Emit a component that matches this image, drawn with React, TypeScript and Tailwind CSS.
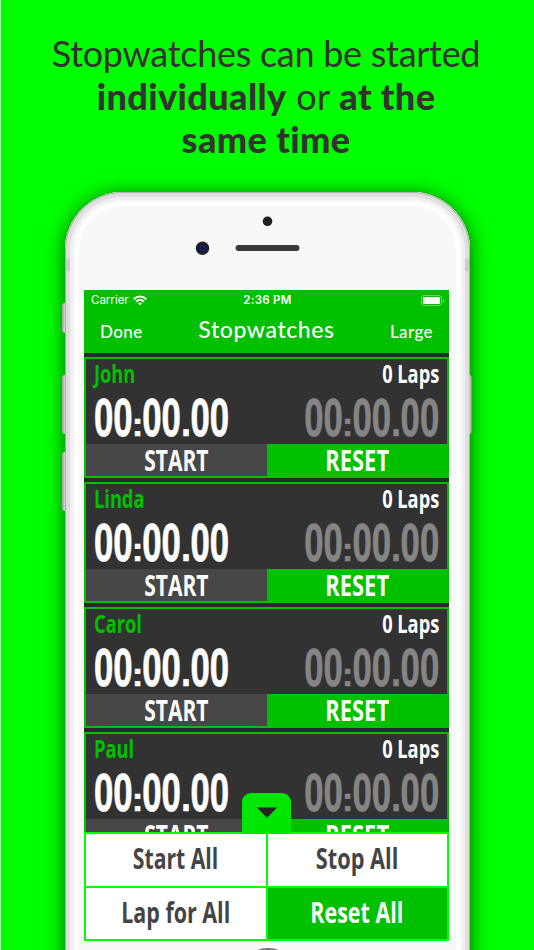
const stopwatches = [
    { name: "John", laps: 0 },
    { name: "Linda", laps: 0 },
    { name: "Carol", laps: 0 },
    { name: "Paul", laps: 0 },
];

function Time({ className }: { className: string }) {
    return (
        <div className={`flex shrink-0 items-baseline scale-x-[0.655] font-['Liberation_Sans',sans-serif] text-[53px] leading-[44px] font-bold whitespace-nowrap [-webkit-text-stroke:0.7px_currentColor] ${className}`}>
            <span>00</span>
            <span className="w-[14.7px] scale-x-[1.5] text-center text-[34px]">:</span>
            <span>00</span>
            <span className="w-[14.7px] scale-x-[1.25] text-center text-[42px]">.</span>
            <span>00</span>
        </div>
    );
}

function StopwatchCard({ name, laps }: { name: string; laps: number }) {
    return (
        <div className="h-[121px] shrink-0 border-2 border-[#00c000] bg-[#323232]">
            <div className="flex h-[34px] items-start justify-between pl-2 pr-2 text-[25px] leading-[29px] font-bold">
                <span className="origin-left scale-x-[0.73] text-[#00c000]">{name}</span>
                <span className="origin-right scale-x-[0.73] text-white">{laps} Laps</span>
            </div>
            <div className="flex h-[51px] items-center justify-between pt-[4px] pl-2 pr-2">
                <Time className="-mr-[72px] origin-left text-white" />
                <Time className="-ml-[72px] origin-right text-[#858585]" />
            </div>
            <div className="flex h-8 items-start text-[29px] font-bold leading-[31px] text-white">
                <div className="flex h-full w-[181px] justify-center bg-[#474747]">
                    <span className="scale-x-[0.725]">START</span>
                </div>
                <div className="flex h-full flex-1 justify-center bg-[#00c000]">
                    <span className="scale-x-[0.755]">RESET</span>
                </div>
            </div>
        </div>
    );
}

function StatusBar() {
    return (
        <div className="grid h-[20px] grid-cols-3 items-center pt-px pl-[7px] pr-[5px] font-['Inter',sans-serif] text-[11.5px] text-white">
            <div className="flex items-center gap-1">
                <span>Carrier</span>
                <svg width="14" height="11" viewBox="0 0 14 11" fill="none" stroke="currentColor" strokeWidth="2.1">
                    <path d="M0.7 4.2C4.2 0.6 9.8 0.6 13.3 4.2" />
                    <path d="M3 6.6C5.3 4.4 8.7 4.4 11 6.6" />
                    <path d="M7 10.4L4.9 8.2C6.1 7.2 7.9 7.2 9.1 8.2Z" fill="currentColor" stroke="none" />
                </svg>
            </div>
            <span className="text-center font-semibold tracking-[0.3px]">2:36 PM</span>
            <div className="flex items-center justify-end gap-px">
                <div className="h-[11px] w-[21px] rounded-[3px] border border-[#6cd86c] p-px">
                    <div className="h-full rounded-[1px] bg-white" />
                </div>
                <div className="h-1 w-px rounded-r bg-[#6cd86c]" />
            </div>
        </div>
    );
}

export default function App() {
    return (
        <div className="relative flex h-[950px] w-[534px] flex-col items-center overflow-hidden border-l border-[#b5ffb5] bg-[#00ff00] font-['Open_Sans',sans-serif]">
            {/* headline */}
            <h1 className="h-[192px] shrink-0 pt-[32px] pr-[3px] text-center font-['Lato',sans-serif] text-[36px] leading-[43px] whitespace-nowrap text-[#323232]">
                <span className="block tracking-[-0.28px]">Stopwatches can be started</span>
                <span className="block tracking-[0.4px]"><b className="font-black">individually</b> or <b className="font-black">at the</b></span>
                <b className="block font-black tracking-[0.4px]">same time</b>
            </h1>

            {/* phone */}
            <div className="relative h-[860px] w-[405px] shrink-0 rounded-[58px] bg-[#f8f8f8] shadow-[0_3px_20px_rgba(0,50,0,0.75),inset_0_0_0_1px_#adadad,inset_0_0_0_5px_#dfdfdf,inset_0_0_0_8px_#f0f0f0,inset_0_0_0_10px_#f8f8f8,inset_0_0_0_14px_#ffffff]">
                {/* side buttons and antenna bands */}
                <div className="absolute top-[111px] -left-[3px] h-[30px] w-[3px] rounded-l-sm bg-linear-to-r from-[#999999] to-[#dddddd]" />
                <div className="absolute top-[183px] -left-[3px] h-[59px] w-[3px] rounded-l-sm bg-linear-to-r from-[#999999] to-[#dddddd]" />
                <div className="absolute top-[260px] -left-[3px] h-[59px] w-[3px] rounded-l-sm bg-linear-to-r from-[#999999] to-[#dddddd]" />
                <div className="absolute top-[183px] -right-[2px] h-[59px] w-[3px] rounded-r-sm bg-linear-to-r from-[#dddddd] to-[#888888]" />
                <div className="absolute top-[67px] left-px h-3 w-1 bg-[#cccccc]" />
                <div className="absolute top-[67px] right-px h-3 w-1 bg-[#cccccc]" />

                {/* camera, sensor and speaker */}
                <svg className="block" width="405" height="98" viewBox="0 0 405 98">
                    <circle cx="202.5" cy="29.3" r="4.8" fill="#1e1e1e" />
                    <circle cx="137.5" cy="56.3" r="6.7" fill="#222222" />
                    <circle cx="137.5" cy="56.3" r="4.3" fill="#101332" />
                    <circle cx="137.5" cy="56.3" r="2.5" fill="none" stroke="#24369a" />
                    <rect x="170.5" y="53" width="64" height="6" rx="3" fill="#383838" />
                </svg>

                {/* screen */}
                <div className="ml-[19px] flex h-[651px] w-[365px] flex-col bg-[#292929]">
                    <div className="h-[63px] shrink-0 bg-[#00c000]">
                        <StatusBar />
                        <div className="grid h-[43px] grid-cols-[1fr_auto_1fr] items-center px-4 font-['Lato',sans-serif] text-[17px] font-medium tracking-[0.4px] text-white">
                            <span>Done</span>
                            <span className="pb-1 text-[23px] tracking-[0.6px]">Stopwatches</span>
                            <span className="text-right">Large</span>
                        </div>
                    </div>
                    <div className="flex h-[479px] shrink-0 flex-col gap-1 overflow-hidden pt-[4px]">
                        {stopwatches.map((item) => (
                            <StopwatchCard key={item.name} name={item.name} laps={item.laps} />
                        ))}
                    </div>
                    <div className="relative grid h-[109px] w-[365px] grid-cols-2 grid-rows-2 gap-[2px] border-2 border-[#00ff00] bg-[#00ff00] text-[29px] leading-[48px] font-bold text-[#444444]">
                        <div className="absolute -top-[41px] left-[156px] flex h-[41px] w-[49px] justify-center rounded-t-[9px] bg-[#00e600]">
                            <svg className="mt-[14px]" width="20" height="12" viewBox="0 0 20 12">
                                <path d="M0 0.5H20L10 11Z" fill="#252525" />
                            </svg>
                        </div>
                        <div className="flex justify-center bg-white"><span className="scale-x-[0.73]">Start All</span></div>
                        <div className="flex justify-center bg-white"><span className="scale-x-[0.75]">Stop All</span></div>
                        <div className="flex justify-center bg-white"><span className="scale-x-[0.74]">Lap for All</span></div>
                        <div className="flex justify-center bg-[#00c000] text-white"><span className="scale-x-[0.74]">Reset All</span></div>
                    </div>
                </div>

                {/* home button */}
                <div className="mx-auto mt-[7px] h-[58px] w-[58px] rounded-full border-2 border-[#777777] bg-[#f4f4f4]" />
            </div>
        </div>
    );
}
